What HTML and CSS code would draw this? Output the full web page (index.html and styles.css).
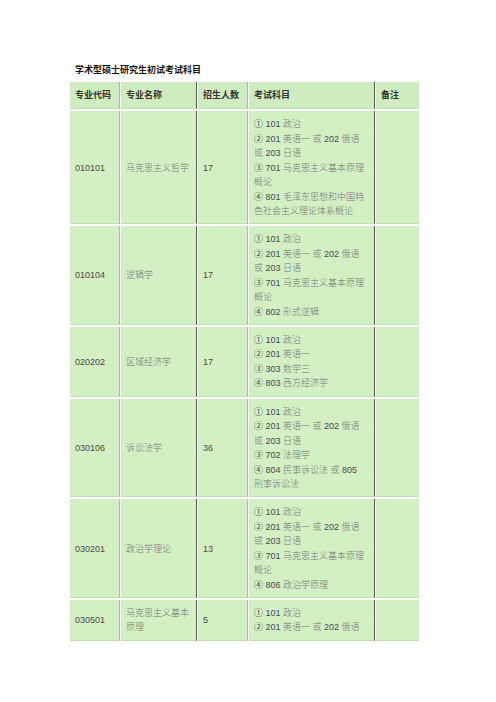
FILE: index.html
```html
<!DOCTYPE html>
<html lang="zh">
<head>
<meta charset="utf-8">
<title>学术型硕士研究生初试考试科目</title>
<link rel="stylesheet" href="styles.css">
</head>
<body>
<div class="page">
  <h1 class="title">学术型硕士研究生初试考试科目</h1>
  <table class="subjects">
    <colgroup>
      <col class="c-code"><col class="c-name"><col class="c-num"><col class="c-exam"><col class="c-note">
    </colgroup>
    <thead>
      <tr>
        <th class="b-light">专业代码</th>
        <th class="b-dark">专业名称</th>
        <th class="b-light">招生人数</th>
        <th class="b-dark">考试科目</th>
        <th>备注</th>
      </tr>
    </thead>
    <tbody>
      <tr>
        <td class="b-light">010101</td>
        <td class="b-dark cn">马克思主义哲学</td>
        <td class="b-light">17</td>
        <td class="b-dark exam">① 101 <span class="cn">政治</span><br>② 201 <span class="cn">英语一 或</span> 202 <span class="cn">俄语</span><br><span class="cn">或</span> 203 <span class="cn">日语</span><br>③ 701 <span class="cn">马克思主义基本原理</span><br><span class="cn">概论</span><br>④ 801 <span class="cn">毛泽东思想和中国特</span><br><span class="cn">色社会主义理论体系概论</span></td>
        <td></td>
      </tr>
      <tr>
        <td class="b-light">010104</td>
        <td class="b-dark cn">逻辑学</td>
        <td class="b-light">17</td>
        <td class="b-dark exam">① 101 <span class="cn">政治</span><br>② 201 <span class="cn">英语一 或</span> 202 <span class="cn">俄语</span><br><span class="cn">或</span> 203 <span class="cn">日语</span><br>③ 701 <span class="cn">马克思主义基本原理</span><br><span class="cn">概论</span><br>④ 802 <span class="cn">形式逻辑</span></td>
        <td></td>
      </tr>
      <tr>
        <td class="b-light">020202</td>
        <td class="b-dark cn">区域经济学</td>
        <td class="b-light">17</td>
        <td class="b-dark exam">① 101 <span class="cn">政治</span><br>② 201 <span class="cn">英语一</span><br>③ 303 <span class="cn">数学三</span><br>④ 803 <span class="cn">西方经济学</span></td>
        <td></td>
      </tr>
      <tr>
        <td class="b-light">030106</td>
        <td class="b-dark cn">诉讼法学</td>
        <td class="b-light">36</td>
        <td class="b-dark exam">① 101 <span class="cn">政治</span><br>② 201 <span class="cn">英语一 或</span> 202 <span class="cn">俄语</span><br><span class="cn">或</span> 203 <span class="cn">日语</span><br>③ 702 <span class="cn">法理学</span><br>④ 804 <span class="cn">民事诉讼法 或</span> 805<br><span class="cn">刑事诉讼法</span></td>
        <td></td>
      </tr>
      <tr>
        <td class="b-light">030201</td>
        <td class="b-dark cn">政治学理论</td>
        <td class="b-light">13</td>
        <td class="b-dark exam">① 101 <span class="cn">政治</span><br>② 201 <span class="cn">英语一 或</span> 202 <span class="cn">俄语</span><br><span class="cn">或</span> 203 <span class="cn">日语</span><br>③ 701 <span class="cn">马克思主义基本原理</span><br><span class="cn">概论</span><br>④ 806 <span class="cn">政治学原理</span></td>
        <td></td>
      </tr>
      <tr>
        <td class="b-light">030501</td>
        <td class="b-dark cn">马克思主义基本<br>原理</td>
        <td class="b-light">5</td>
        <td class="b-dark exam">① 101 <span class="cn">政治</span><br>② 201 <span class="cn">英语一 或</span> 202 <span class="cn">俄语</span></td>
        <td></td>
      </tr>
    </tbody>
  </table>
</div>
</body>
</html>
```

FILE: styles.css
```css
html, body {
  margin: 0;
  padding: 0;
  background: #ffffff;
}

.page {
  padding: 63px 0 0 69px;
  font-family: "Liberation Sans", "Noto Sans CJK SC", sans-serif;
}

.title {
  margin: 0 0 3px 6px;
  font-size: 9px;
  line-height: 14px;
  font-weight: bold;
  color: #111;
}

.subjects {
  border-collapse: separate;
  border-spacing: 1px 2px;
  table-layout: fixed;
  width: 351px;
  font-size: 9px;
  line-height: 14.5px;
  color: #4a4a4a;
}

.c-code { width: 50px; }
.c-name { width: 76px; }
.c-num { width: 50px; }
.c-exam { width: 126px; }
.c-note { width: 43px; }

.subjects th,
.subjects td {
  background: #d3efc4;
  padding: 6px 5px 4.7px 5px;
  text-align: left;
  vertical-align: middle;
  border-bottom: 1px solid #c3dcb5;
  box-sizing: border-box;
}

.subjects th {
  height: 27px;
  padding-top: 5px;
  font-weight: bold;
  color: #333;
  background: #cfecc0;
}

.subjects td.exam {
  vertical-align: top;
  white-space: nowrap;
}

.b-light { border-right: 1px solid #a9bba3; }
.b-dark { border-right: 1px solid #5a5a5a; }

.cn {
  color: #777;
  font-weight: 300;
}
```
